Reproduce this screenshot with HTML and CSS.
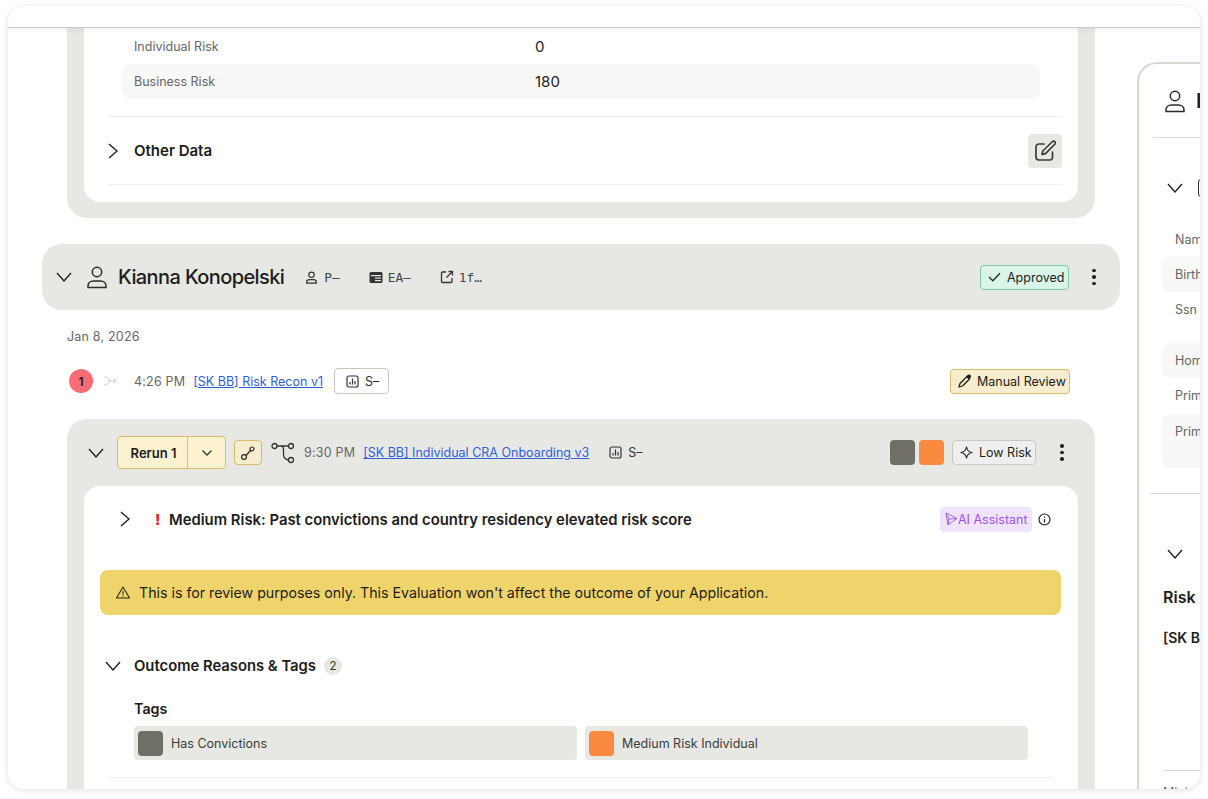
FILE: index.html
```html
<!DOCTYPE html>
<html lang="en">
  <head>
    <meta charset="UTF-8" />
    <meta name="viewport" content="width=device-width, initial-scale=1.0" />
    <title>Application Review</title>
    <link rel="stylesheet" href="styles.css">
  </head>
  <body>
    <div class="window">
      <div class="topbar"></div>
      <div class="main">
        <div class="content">
          <!-- previous evaluation, scrolled up -->
          <div class="card card-prev">
            <div class="inner inner-prev">
              <div class="data-row"><span class="data-label">Individual Risk</span><span class="data-value">0</span></div>
              <div class="data-row shaded"><span class="data-label">Business Risk</span><span class="data-value">180</span></div>
              <div class="other-row">
                <svg class="chev" width="14" height="18" viewBox="0 0 14 18"><path d="M3 2l8 7-8 7" /></svg>
                <span class="other-title">Other Data</span>
                <button class="edit-btn">
                  <svg width="24" height="24" viewBox="0 0 24 24" fill="none" stroke="#3a3a38" stroke-width="1.7" stroke-linejoin="round" stroke-linecap="round"><path d="M11 5H6a3 3 0 0 0-3 3v10a3 3 0 0 0 3 3h11a2.500 2.500 0 0 0 2.500-2.500V13" /><path d="M9 15.500l.8-3.500L19.500 2.500a1.800 1.800 0 0 1 2.500 2.500L12.500 14.700z" /></svg>
                </button>
              </div>
            </div>
          </div>

          <div class="person-bar">
            <svg class="chev-down" width="18" height="12" viewBox="0 0 18 12"><path d="M2 2l7 8 7-8" /></svg>
            <svg class="person-icon" width="24" height="24" viewBox="0 0 24 24" fill="none" stroke="#2b2b29" stroke-width="1.500"><circle cx="12" cy="7" r="4.700" /><path d="M3 22.500v-1.500c0-3 2.500-5 5.500-5h7c3 0 5.500 2 5.500 5v1.500z" /></svg>
            <span class="person-name">Kianna Konopelski</span>
            <span class="chip chip-first">
              <svg width="13" height="13" viewBox="0 0 24 24" fill="none" stroke="#333" stroke-width="2.200"><circle cx="12" cy="7" r="5" /><path d="M3 22.500v-1.500c0-3 2.500-5 5.500-5h7c3 0 5.500 2 5.500 5v1.500z" /></svg>
              P–
            </span>
            <span class="chip chip-ea">
              <svg width="14" height="13" viewBox="0 0 14 13"><rect x="0.500" y="1" width="13" height="11" rx="1.500" fill="#333" /><rect x="2" y="4" width="10" height="1.200" fill="#e7e8e3" /><rect x="6" y="6.500" width="6" height="1.200" fill="#e7e8e3" /><rect x="6" y="9" width="6" height="1.200" fill="#e7e8e3" /></svg>
              EA–
            </span>
            <span class="chip chip-link">
              <svg width="14" height="14" viewBox="0 0 14 14" fill="none" stroke="#333" stroke-width="1.300"><path d="M6 2H2.500A1 1 0 0 0 1.500 3v8.500a1 1 0 0 0 1 1H11a1 1 0 0 0 1-1V8" /><path d="M6.500 7.500L12.500 1.500M8.500 1.500h4v4" /></svg>
              1f…
            </span>
            <span class="status approved">
              <svg width="13" height="10" viewBox="0 0 13 10" fill="none" stroke="#1f2a25" stroke-width="1.300"><path d="M1 5l3.800 3.800L12 1.200" /></svg>
              Approved
            </span>
            <span class="dots dots-person"><i></i><i></i><i></i></span>
          </div>

          <div class="date-line">Jan 8, 2026</div>

          <div class="step-row">
            <span class="step-num">1</span>
            <svg class="step-arrow" width="14" height="10" viewBox="0 0 14 10" fill="none" stroke="#c9c8bf" stroke-width="1"><path d="M1 1h2.500L7 5 3.500 9H1M7 5h6M10.500 2.800L13 5l-2.500 2.200" /></svg>
            <span class="time">4:26 PM</span>
            <a class="flow-link" href="#">[SK BB] Risk Recon v1</a>
            <span class="score-btn">
              <svg width="13" height="13" viewBox="0 0 13 13" fill="none" stroke="#333" stroke-width="1.200"><rect x="1" y="1" width="11" height="11" rx="2" /><path d="M4 9.500V7M6.500 9.500V3.500M9 9.500V6" /></svg>
              S–
            </span>
            <span class="status manual">
              <svg width="14" height="14" viewBox="0 0 14 14" fill="none" stroke="#1c1c1a" stroke-width="1.300" stroke-linejoin="round"><path d="M1 13l1-3.500L9 2.500l2.500 2.500-7 7z" /><path d="M9 2.500l1-1c.6-.6 1.500-.6 2 0s.6 1.400 0 2l-1 1z" fill="#1c1c1a" /></svg>
              Manual Review
            </span>
          </div>

          <div class="card card-run">
            <div class="run-head">
              <svg class="chev-down" width="18" height="12" viewBox="0 0 18 12"><path d="M2 2l7 8 7-8" /></svg>
              <div class="rerun">
                <span class="rerun-label">Rerun 1</span>
                <span class="rerun-caret"><svg width="12" height="8" viewBox="0 0 12 8" fill="none" stroke="#333" stroke-width="1.300"><path d="M1.500 1.500L6 6l4.500-4.500" /></svg></span>
              </div>
              <span class="link-btn">
                <svg width="16" height="16" viewBox="0 0 16 16" fill="none" stroke="#2c2c2a" stroke-width="1.200"><circle cx="4" cy="12" r="2.400" /><circle cx="12" cy="4" r="2" /><path d="M6 10.500L10.500 5.500" /></svg>
              </span>
              <svg class="branch-icon" width="24" height="22" viewBox="0 0 24 22" fill="none" stroke="#333" stroke-width="1.300"><circle cx="3.500" cy="4" r="2.500" /><circle cx="20" cy="4" r="2.500" /><circle cx="20" cy="18" r="2.500" /><path d="M6 4h11.500M10 4c2 0 2.500 1.500 2.500 4v4c0 3 2 5.500 5 6" /></svg>
              <span class="time">9:30 PM</span>
              <a class="flow-link" href="#">[SK BB] Individual CRA Onboarding v3</a>
              <span class="score-plain">
                <svg width="13" height="13" viewBox="0 0 13 13" fill="none" stroke="#333" stroke-width="1.200"><rect x="1" y="1" width="11" height="11" rx="2" /><path d="M4 9.500V7M6.500 9.500V3.500M9 9.500V6" /></svg>
                S–
              </span>
              <span class="swatch gray swatch-first"></span>
              <span class="swatch orange"></span>
              <span class="risk-btn">
                <svg width="13" height="13" viewBox="0 0 13 13" fill="none" stroke="#222" stroke-width="1.200" stroke-linejoin="round"><path d="M6.500 1c.6 3.300 2.200 4.900 5.500 5.500-3.300.6-4.900 2.200-5.500 5.500C5.900 8.700 4.300 7.100 1 6.500 4.300 5.900 5.900 4.300 6.500 1z" /></svg>
                Low Risk
              </span>
              <span class="dots dots-run"><i></i><i></i><i></i></span>
            </div>

            <div class="inner inner-run">
              <div class="summary-row">
                <svg class="chev" width="14" height="18" viewBox="0 0 14 18"><path d="M3 2l8 7-8 7" /></svg>
                <span class="bang">!</span>
                <span class="summary-title">Medium Risk: Past convictions and country residency elevated risk score</span>
                <span class="ai-btn">
                  <svg width="14" height="14" viewBox="0 0 14 14" fill="none" stroke="#a463e8" stroke-width="1"><path d="M2 1l11 5.500L4 13z" /><path d="M2 1l3 6 8-.500M5 7l-1 6" /></svg>
                  AI Assistant
                </span>
                <svg class="info-icon" width="13" height="13" viewBox="0 0 13 13" fill="none" stroke="#222" stroke-width="1.200"><circle cx="6.500" cy="6.500" r="5.500" /><path d="M6.500 6v3.500M6.500 3.500v1.200" /></svg>
              </div>

              <div class="warning">
                <svg width="14" height="13" viewBox="0 0 14 13" fill="none" stroke="#2a2a20" stroke-width="1.100" stroke-linejoin="round"><path d="M7 1L13.500 12H.5z" /><path d="M7 5v3.500M7 9.500v1" /></svg>
                This is for review purposes only. This Evaluation won't affect the outcome of your Application.
              </div>

              <div class="outcome-row">
                <svg class="chev-down" width="18" height="12" viewBox="0 0 18 12"><path d="M2 2l7 8 7-8" /></svg>
                <span class="outcome-title">Outcome Reasons &amp; Tags</span>
                <span class="count">2</span>
              </div>

              <div class="tags-title">Tags</div>
              <div class="tags">
                <div class="tag"><span class="swatch gray"></span>Has Convictions</div>
                <div class="tag"><span class="swatch orange"></span>Medium Risk Individual</div>
              </div>
              <div class="rule"></div>
            </div>
          </div>
        </div>

        <aside class="panel">
          <div class="panel-head">
            <svg width="24" height="24" viewBox="0 0 24 24" fill="none" stroke="#2b2b29" stroke-width="1.500"><circle cx="12" cy="7" r="4.700" /><path d="M3 22.500v-1.500c0-3 2.500-5 5.500-5h7c3 0 5.500 2 5.500 5v1.500z" /></svg>
            <span class="panel-name">Individual</span>
          </div>
          <div class="panel-sub">
            <svg class="chev-down" width="18" height="12" viewBox="0 0 18 12"><path d="M2 2l7 8 7-8" /></svg>
            <span class="panel-box"></span>
          </div>
          <div class="panel-rows">
            <div class="panel-row">Name</div>
            <div class="panel-row shaded">Birthdate</div>
            <div class="panel-row">Ssn</div>
            <div class="panel-gap"></div>
            <div class="panel-row shaded">Home Address</div>
            <div class="panel-row">Primary Phone</div>
            <div class="panel-row shaded tall">Primary Email</div>
          </div>
          <div class="panel-rule"></div>
          <div class="panel-chev">
            <svg class="chev-down" width="18" height="12" viewBox="0 0 18 12"><path d="M2 2l7 8 7-8" /></svg>
          </div>
          <div class="panel-risk">Risk Score</div>
          <div class="panel-flow">[SK BB] Risk Recon v1</div>
          <div class="panel-rule2"></div>
          <div class="panel-row last">Minimum</div>
        </aside>
      </div>
    </div>
  </body>
</html>
```
FILE: styles.css
```css
html,
body {
  margin: 0;
  padding: 0;
  height: 100%;
  background: #fff;
}
body {
  font-family: "Inter", "Liberation Sans", sans-serif;
  color: #1d1d1b;
  overflow: hidden;
}
svg {
  display: block;
  flex-shrink: 0;
}
.window {
  box-sizing: border-box;
  width: 1192px;
  height: 783px;
  margin: 6px 0 0 8px;
  background: #fff;
  border-radius: 16px;
  box-shadow: 0 1px 6px rgba(0, 0, 0, 0.12);
  overflow: hidden;
  display: flex;
  flex-direction: column;
}
.topbar {
  height: 21px;
  flex-shrink: 0;
  border-bottom: 1px solid #c8c8c4;
  box-shadow: 0 2px 5px rgba(0, 0, 0, 0.06);
  position: relative;
  z-index: 2;
}
.main {
  flex: 1;
  display: flex;
  gap: 17px;
  padding-left: 34px;
  overflow: hidden;
}
.content {
  width: 1078px;
  flex-shrink: 0;
}

.chev,
.chev-down {
  fill: none;
  stroke: #222;
  stroke-width: 1.400;
}

.card {
  margin: 0 25px;
  background: #e7e8e3;
  padding: 0 17px;
}
.inner {
  background: #fff;
}
.card-prev {
  padding-bottom: 16px;
  border-radius: 0 0 20px 20px;
}
.inner-prev {
  border-radius: 0 0 16px 16px;
  padding: 1px 16px 17px 25px;
}
.data-row {
  display: flex;
  align-items: center;
  height: 35px;
  margin: 0 22px 0 13px;
  padding-left: 12px;
  border-radius: 8px;
}
.data-row.shaded {
  background: #f8f8f6;
}
.data-label {
  width: 401px;
  font-size: 12.500px;
  color: #666;
}
.data-value {
  font-size: 15px;
  color: #222;
}
.other-row {
  display: flex;
  align-items: center;
  margin-top: 17px;
  box-sizing: border-box;
  height: 69px;
  border-top: 1px solid #eeeeea;
  border-bottom: 1px solid #eeeeea;
}
.other-row .chev {
  margin-left: -3px;
}
.other-title {
  margin-left: 14px;
  font-size: 15px;
  font-weight: 600;
}
.edit-btn {
  margin-left: auto;
  width: 34px;
  height: 34px;
  border: none;
  padding: 0 0 0 5px;
  background: #e7e8e3;
  border-radius: 4px;
}

.person-bar {
  margin-top: 26px;
  height: 66px;
  background: #e7e8e3;
  border-radius: 20px;
  display: flex;
  align-items: center;
  padding-left: 13px;
}
.person-icon {
  margin-left: 12px;
}
.person-name {
  margin-left: 9px;
  font-size: 20px;
  font-weight: 500;
  letter-spacing: -0.600px;
}
.chip {
  display: flex;
  align-items: center;
  gap: 5px;
  font-family: "DejaVu Sans Mono", monospace;
  font-size: 12.800px;
  color: #444;
}
.chip-first {
  margin-left: 21px;
  gap: 6px;
}
.chip-ea {
  margin-left: 29px;
}
.chip-link {
  margin-left: 29px;
}
.status {
  display: flex;
  align-items: center;
  box-sizing: border-box;
  font-size: 12.500px;
  border-radius: 4px;
  gap: 6px;
}
.approved {
  margin-left: auto;
  width: 89px;
  height: 25px;
  padding-left: 7px;
  background: #d8f5e7;
  border: 1px solid #7fc8a6;
}
.dots {
  display: flex;
  flex-direction: column;
  gap: 3px;
  width: 4px;
}
.dots i {
  width: 3.500px;
  height: 3.500px;
  border-radius: 50%;
  background: #26261f;
}
.dots-person {
  margin: 0 24px 0 23px;
}

.date-line {
  margin: 19px 0 0 25px;
  height: 16px;
  line-height: 16px;
  font-size: 12.500px;
  letter-spacing: 0.200px;
  color: #666;
}
.step-row {
  display: flex;
  align-items: center;
  height: 26px;
  margin: 23px 50px 0 27px;
}
.step-num {
  width: 24px;
  height: 24px;
  border-radius: 50%;
  background: #f96c75;
  display: flex;
  align-items: center;
  justify-content: center;
  font-size: 12px;
  font-weight: 600;
}
.step-arrow {
  margin-left: 10px;
}
.time {
  font-size: 12.500px;
  color: #666;
  letter-spacing: 0.200px;
}
.step-row .time {
  margin-left: 17px;
}
.flow-link {
  font-size: 12.500px;
  color: #2f5fd8;
  margin-left: 8px;
}
.score-btn {
  display: flex;
  align-items: center;
  gap: 6px;
  box-sizing: border-box;
  width: 55px;
  height: 26px;
  margin-left: 11px;
  padding-left: 11px;
  background: #fff;
  border: 1px solid #c8c7be;
  border-radius: 4px;
  font-size: 12.500px;
  color: #333;
}
.manual {
  margin-left: auto;
  width: 120px;
  height: 25px;
  padding-left: 7px;
  gap: 5px;
  background: #f5edcd;
  border: 1px solid #d6bd6a;
}

.card-run {
  margin-top: 25px;
  border-radius: 20px 20px 0 0;
  height: 400px;
}
.run-head {
  display: flex;
  align-items: center;
  height: 67px;
  margin: 0 -17px;
  padding-left: 20px;
}
.rerun {
  display: flex;
  margin-left: 12px;
  height: 33px;
  box-sizing: border-box;
  background: #fcf2d0;
  border: 1px solid #dcbb64;
  border-radius: 4px;
}
.rerun-label {
  box-sizing: border-box;
  width: 70px;
  padding-left: 2px;
  display: flex;
  align-items: center;
  justify-content: center;
  font-size: 13px;
  font-weight: 600;
  border-right: 1px solid #dcbb64;
}
.rerun-caret {
  width: 37px;
  display: flex;
  align-items: center;
  justify-content: center;
}
.link-btn {
  margin-left: 8px;
  box-sizing: border-box;
  width: 28px;
  height: 25px;
  background: #f5edcd;
  border: 1px solid #dcbb64;
  border-radius: 4px;
  display: flex;
  align-items: center;
  justify-content: center;
}
.branch-icon {
  margin-left: 9px;
}
.run-head .time {
  margin-left: 9px;
}
.score-plain {
  display: flex;
  align-items: center;
  gap: 6px;
  margin-left: 20px;
  font-size: 12.500px;
  color: #333;
}
.swatch {
  display: block;
  flex-shrink: 0;
  width: 25px;
  height: 25px;
  border-radius: 4px;
}
.gray {
  background: #6f6f66;
}
.orange {
  background: #fb8a41;
}
.swatch-first {
  margin-left: auto;
  margin-right: 4px;
}
.risk-btn {
  display: flex;
  align-items: center;
  gap: 6px;
  box-sizing: border-box;
  width: 84px;
  height: 25px;
  margin-left: 8px;
  padding-left: 7px;
  background: #efefed;
  border: 1px solid #c9c9c4;
  border-radius: 4px;
  font-size: 12.500px;
}
.dots-run {
  margin: 0 31px 0 24px;
}

.inner-run {
  border-radius: 16px 16px 0 0;
  height: 333px;
  padding: 0 17px 0 16px;
}
.summary-row {
  display: flex;
  align-items: center;
  height: 66px;
  padding-left: 18px;
}
.bang {
  margin-left: 23px;
  width: 14px;
  font-size: 15px;
  font-weight: 800;
  color: #e0262c;
}
.summary-title {
  margin-top: 1px;
  font-size: 14.850px;
  font-weight: 600;
}
.ai-btn {
  display: flex;
  align-items: center;
  gap: 0;
  margin-left: auto;
  box-sizing: border-box;
  width: 92px;
  height: 25px;
  padding-left: 4px;
  background: #f0e4fc;
  border-radius: 4px;
  font-size: 12.500px;
  color: #a050e8;
}
.info-icon {
  margin: 0 10px 0 6px;
}
.warning {
  display: flex;
  align-items: center;
  gap: 9px;
  height: 45px;
  margin-top: 18px;
  padding-left: 16px;
  background: #efd36b;
  border-radius: 8px;
  font-size: 14.200px;
}
.outcome-row {
  display: flex;
  align-items: center;
  margin: 39px 0 0 4px;
  height: 24px;
}
.outcome-title {
  margin-left: 12px;
  font-size: 14.800px;
  font-weight: 600;
}
.count {
  margin-left: 8px;
  width: 18px;
  height: 18px;
  border-radius: 50%;
  background: #e7e8e3;
  display: flex;
  align-items: center;
  justify-content: center;
  font-size: 11.500px;
  color: #333;
}
.tags-title {
  margin: 22px 0 0 34px;
  font-size: 14.300px;
  font-weight: 600;
  line-height: 17px;
}
.tags {
  display: grid;
  grid-template-columns: 443px 443px;
  gap: 8px;
  margin: 9px 0 0 34px;
}
.tag {
  display: flex;
  align-items: center;
  gap: 8px;
  height: 34px;
  padding-left: 4px;
  background: #e7e8e3;
  border-radius: 4px;
  font-size: 12.500px;
  color: #3c3c38;
}
.rule {
  height: 1px;
  margin: 17px 8px 0 9px;
  background: #eeeeea;
}

.panel {
  width: 300px;
  flex-shrink: 0;
  margin-top: 34px;
  box-sizing: border-box;
  height: 800px;
  background: #fff;
  border: 2px solid #d8d8d2;
  border-right: none;
  border-bottom: none;
  border-radius: 20px 0 0 0;
}
.panel-head {
  display: flex;
  align-items: center;
  gap: 9px;
  height: 73px;
  margin-left: 15px;
  padding-left: 9px;
  border-bottom: 1px solid #d8d8d2;
}
.panel-name {
  font-size: 20px;
  font-weight: 600;
}
.panel-sub {
  display: flex;
  align-items: center;
  height: 24px;
  margin-top: 38px;
  padding-left: 27px;
}
.panel-box {
  margin-left: 14px;
  width: 14px;
  height: 16px;
  border: 1.500px solid #333;
  border-radius: 3px;
}
.panel-rows {
  margin: 22px 0 0 23px;
}
.panel-row {
  height: 35px;
  line-height: 35px;
  padding-left: 13px;
  font-size: 12.500px;
  color: #666;
  border-radius: 8px;
}
.panel-row.shaded {
  background: #f8f8f6;
}
.panel-row.tall {
  height: 54px;
  margin-top: 1px;
}
.panel-gap {
  height: 16px;
}
.panel-rule {
  height: 1px;
  margin: 25px 0 0 11px;
  background: #d8d8d2;
}
.panel-chev {
  margin: 54px 0 0 27px;
}
.panel-risk {
  margin: 27px 0 0 24px;
  font-size: 16px;
  font-weight: 600;
  line-height: 20px;
}
.panel-flow {
  margin: 21px 0 0 24px;
  font-size: 14px;
  font-weight: 600;
  line-height: 20px;
}
.panel-rule2 {
  height: 1px;
  margin: 122px 0 0 24px;
  background: #d8d8d2;
}
.panel-row.last {
  margin-top: 4px;
  padding-left: 24px;
}
```
